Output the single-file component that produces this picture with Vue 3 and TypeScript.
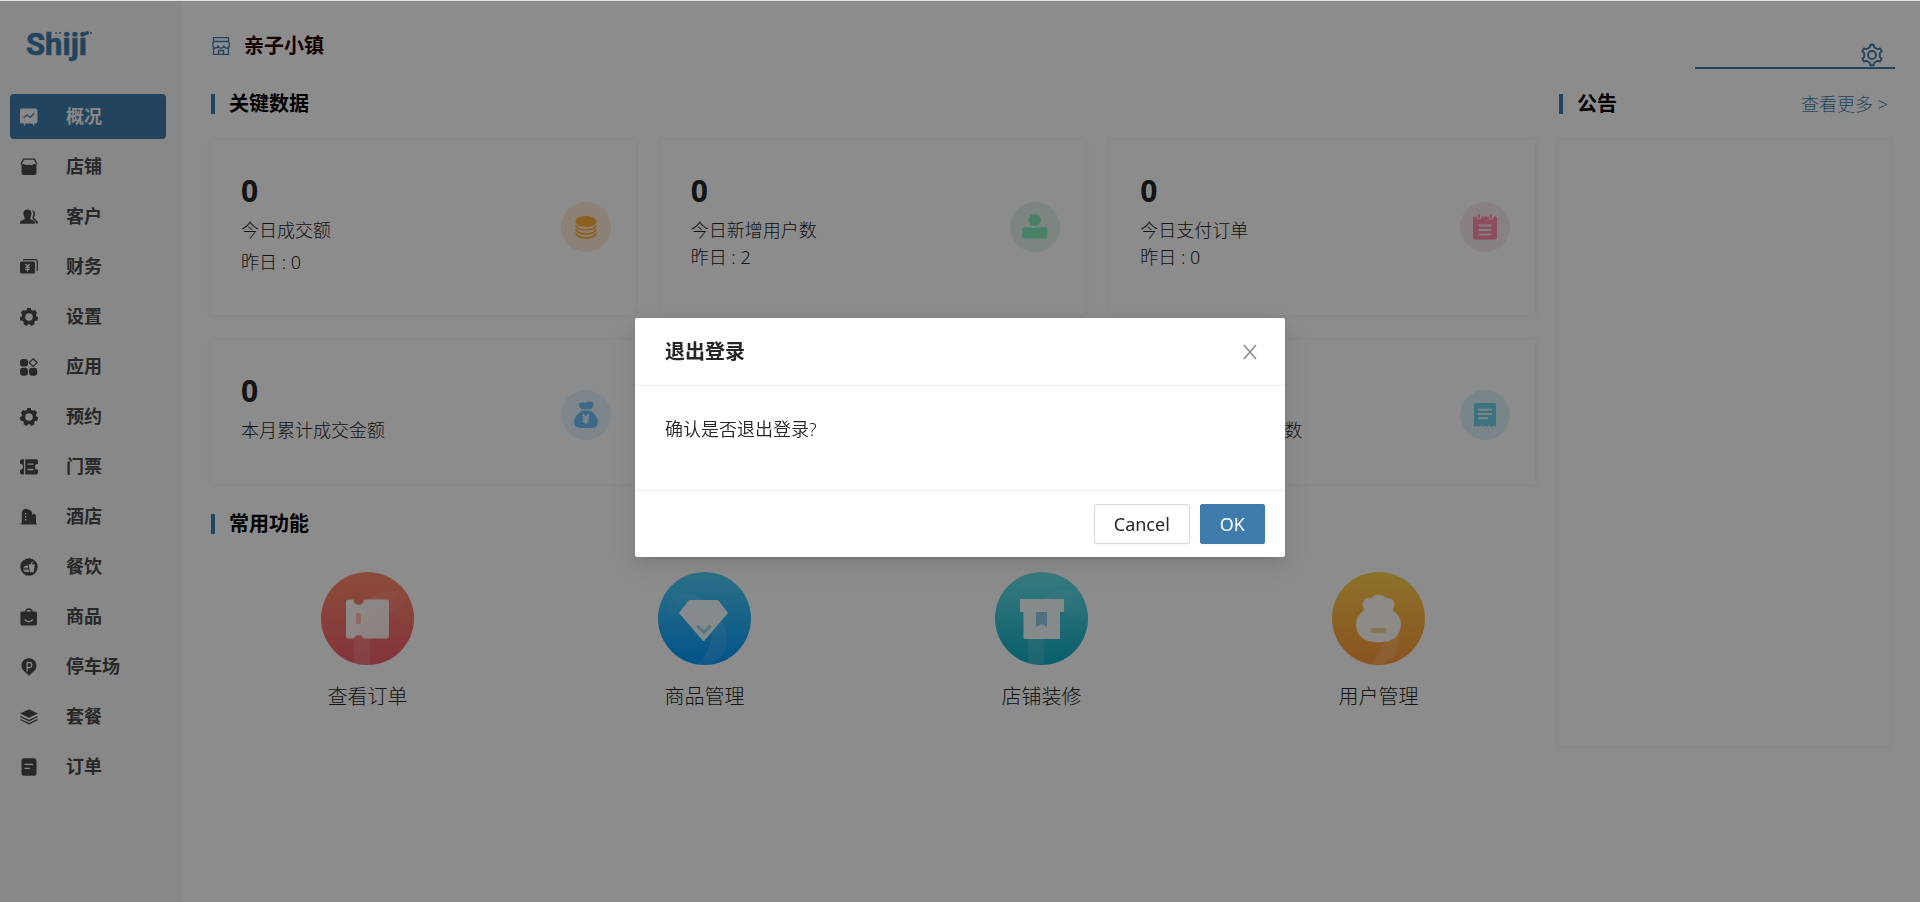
<script setup lang="ts">
import { ref } from 'vue'

interface Glyph { solid?: string; line?: string; cut?: string }
interface MenuItem { label: string; icon: Glyph }
interface Stat { value: number; label?: string; yesterday?: number; tone: string; icon: Glyph; loose?: boolean }

/* Cog outline: teeth spread evenly round the centre, the first one pointing up. */
function gear(teeth: number, c: number, outer: number, inner: number, top: number, base: number): string {
  const points: string[] = []
  const step = (Math.PI * 2) / teeth
  for (let i = 0; i < teeth; i++) {
    const a = i * step - Math.PI / 2
    const corners: [number, number][] = [
      [inner, a - step * base], [outer, a - step * top], [outer, a + step * top], [inner, a + step * base],
    ]
    for (const [r, t] of corners) points.push(`${(c + r * Math.cos(t)).toFixed(2)} ${(c + r * Math.sin(t)).toFixed(2)}`)
  }
  return `M${points.join('L')}Z`
}

const cog: Glyph = { solid: gear(7, 9, 9.2, 7.4, 0.22, 0.34) + 'M9 5.2a3.800 3.800 0 1 0 0 7.600a3.800 3.800 0 0 0 0-7.600Z' }
const headerGear = gear(6, 12, 10.4, 8, 0.15, 0.27)

const menu: MenuItem[] = [
  { label: '概况', icon: { solid: 'M2 .5h13.5a2 2 0 0 1 2 2v11a2 2 0 0 1-2 2H2a2 2 0 0 1-2-2v-11a2 2 0 0 1 2-2Z', line: 'M5.2 15l-1 2.6M12.8 15l1 2.6', cut: 'M3.6 9.8L7 7l3.2 2.2 3.9-3.7' } },
  { label: '店铺', icon: { solid: 'M1.5 7Q3 5.2 5 6.4Q7 7.8 9 6.4Q11 7.8 13 6.4Q15 5.2 16.5 7V14.5a2.5 2.5 0 0 1-2.500 2.500h-10a2.500 2.500 0 0 1-2.500-2.500Z', line: 'M1 6.500L3.500 1.200h11L17 6.500' } },
  { label: '客户', icon: { solid: 'M7.500 1.500c3 0 4.300 2.200 4 4.700-.2 2-1.300 3-1.300 4.200 0 1.500 4.800 1.600 4.800 4.100v1.200H0v-1.200C0 12 4.800 11.900 4.800 10.400 4.800 9.200 3.700 8.200 3.500 6.200 3.200 3.700 4.500 1.500 7.500 1.500ZM11.700 2.300c2.700.2 3.700 2.200 3.400 4.200-.2 1.700-1.200 2.400-1 3.500.2 1.200 3.700 1.700 3.900 5.500h-2c0-3.500-3.700-3.400-3.700-5.400 0-1 1-1.700 1.100-4 .1-1.700-.7-2.900-1.700-3.800Z' } },
  { label: '财务', icon: { solid: 'M1.500 3.500h12A1.500 1.500 0 0 1 15 5v9a1.500 1.500 0 0 1-1.500 1.500h-12A1.500 1.500 0 0 1 0 14V5a1.500 1.500 0 0 1 1.500-1.500Z', line: 'M3 1.700h12.500a1.800 1.800 0 0 1 1.800 1.800V13', cut: 'M5.500 6l2 2.500 2-2.500M7.500 8.500v5M5.300 9.300h4.400M5.300 11.400h4.400' } },
  { label: '设置', icon: cog },
  { label: '应用', icon: { solid: 'M3 1h2a3 3 0 0 1 3 3v1.500a3 3 0 0 1-3 3h-2A3 3 0 0 1 0 5.500V4A3 3 0 0 1 3 1ZM3 9.700h2A3 3 0 0 1 8 12.700v2a3 3 0 0 1-3 3h-2A3 3 0 0 1 0 14.700v-2a3 3 0 0 1 3-3ZM12 9.700h2.200a3 3 0 0 1 3 3v2a3 3 0 0 1-3 3H12A3 3 0 0 1 9 14.700v-2a3 3 0 0 1 3-3Z', line: 'M13.200.8L17.200 4.600 13.200 8.400 9.200 4.600Z' } },
  { label: '预约', icon: cog },
  { label: '门票', icon: { solid: 'M2 1.300h14a2 2 0 0 1 2 2v2.500a3 3 0 0 0 0 6v2.700a2 2 0 0 1-2 2H2a2 2 0 0 1-2-2v-2.700a3 3 0 0 0 0-6V3.300a2 2 0 0 1 2-2Z', cut: 'M4.600 1v16M7.500 6.200h6M7.500 11.500h6' } },
  { label: '酒店', icon: { solid: 'M1.800 15.500V4.500Q1.800 2.500 3.800 1.500Q6 0 8.500 1.500Q12 2.800 12 5V7l1.500-1.500 2.500 1.500V15.500h1v1H.5v-1ZM5 5v1.600h1.300V5ZM5 8v1.600h1.300V8ZM5 11v1.600h1.300V11Z' } },
  { label: '餐饮', icon: { solid: 'M9 .3a8.700 8.700 0 1 0 0 17.400A8.700 8.700 0 0 0 9 .3ZM8.800 6.200h2l1-2.200 1.700-.6.3.7-1.300.6-.6 1.500h2.800v1.300l-1 6.700H9.800L9 7.500ZM3.500 9.800Q4 7 7.800 7.500L8.500 9.800ZM3 10.700h5.700v.7H3ZM3.500 12.200h5.400l.2 1.800H5Q3.800 13.600 3.500 12.200Z' } },
  { label: '商品', icon: { solid: 'M2 3.500h13.300a1.700 1.700 0 0 1 1.700 1.700v10.600a1.700 1.700 0 0 1-1.700 1.700H2A1.700 1.700 0 0 1 .4 15.800V5.200A1.700 1.700 0 0 1 2 3.500Z', line: 'M5.700 4Q5.700 1 8.800 1Q12 1 12 4', cut: 'M4.800 11.500Q8.700 16 12.800 11.500' } },
  { label: '停车场', icon: { solid: 'M9 .3c4.300 0 7.500 3.300 7.500 7.400 0 3.300-2 5.200-4.300 7L9 17.700 5.800 14.700C3.500 12.900 1.500 11 1.500 7.700 1.500 3.600 4.700.3 9 .3Z', cut: 'M7.200 13.500V4.500h2q2.600.1 2.600 2.500T9.200 9.600H7.200' } },
  { label: '套餐', icon: { solid: 'M9 1.300L18 5.500 9 9.700 0 5.500Z', line: 'M.3 8.500L9 12.700l8.700-4.200M.3 11.500L9 15.700l8.700-4.200' } },
  { label: '订单', icon: { solid: 'M4 .3h10a2.500 2.500 0 0 1 2.500 2.500v12.400a2.500 2.500 0 0 1-2.500 2.500H4a2.500 2.500 0 0 1-2.500-2.500V2.800A2.500 2.500 0 0 1 4 .3Z', cut: 'M4.500 6.300h8.500M4.500 10.300h5.500' } },
]

const person: Glyph = { solid: 'M12.700 0a6 6 0 1 1 0 12.200 6 6 0 0 1 0-12.200ZM2.300 13.200H8.500q4.300 2 8.600 0h6.200a2 2 0 0 1 2 2v7.300a2 2 0 0 1-2 2H2.300a2 2 0 0 1-2-2v-7.300a2 2 0 0 1 2-2Z' }

const todayStats: Stat[] = [
  { value: 0, label: '今日成交额', yesterday: 0, tone: 'orange', loose: true, icon: { solid: 'M13 2c6.300 0 10.500 2.400 10.500 5.500S19.300 13 13 13 2.500 10.600 2.500 7.500 6.700 2 13 2Z', line: 'M2.900 11.200c1 3 5 4.600 10.100 4.600s9.100-1.600 10.100-4.600M2.900 15.200c1 3 5 4.600 10.100 4.600s9.100-1.600 10.100-4.600M2.900 19.200c1 3 5 4.600 10.100 4.600s9.100-1.600 10.100-4.600' } },
  { value: 0, label: '今日新增用户数', yesterday: 2, tone: 'green', icon: person },
  { value: 0, label: '今日支付订单', yesterday: 0, tone: 'pink', icon: { solid: 'M1.500 2.500h3V4Q5 5.700 7 5.700T9.300 4V2.500h7.600V4q.3 1.700 2.300 1.700T21.500 4V2.500H23.500a1.500 1.500 0 0 1 1.500 1.500V24a1.500 1.500 0 0 1-1.500 1.500h-21A1.500 1.500 0 0 1 1 24V4a1.500 1.500 0 0 1 .5-1.500ZM6 .5h2V4.500H6ZM18 .5h2V4.500h-2Z', cut: 'M6.500 11.500h13M6.500 16h13M6.500 20.500h13' } },
]

const monthStats: Stat[] = [
  { value: 0, label: '本月累计成交金额', tone: 'blue', icon: { solid: 'M6 2Q8.500-1 12.500 1Q16-1.500 20.500.5Q20.500 5.500 17.500 7.200H9Q5.500 5 6 2ZM9 8.500h8.500Q25 14.500 25 20.500Q24.500 26 18.500 26h-11Q1.500 26 1 20.500Q1 14.500 9 8.500Z', cut: 'M9.800 12.500l3 3.700 3-3.700M12.800 16.200v5.500M9.500 16.500h6.600M9.500 19.300h6.600' } },
  { value: 0, tone: 'green', icon: person },
  { value: 0, label: '本月累计支付订单数', tone: 'teal', icon: { solid: 'M3.500 1h19A1.500 1.500 0 0 1 24 2.500V25l-2.300-1.500L19.500 25 17 23.300 14.800 25 12.800 23.300 10.700 25 8.500 23.300 6 25 4.200 23.800 2 25V2.500A1.500 1.500 0 0 1 3.500 1Z', cut: 'M6 7.800h14M6 12h14M6 16.200h10' } },
]

const visible = ref(true)
const keyword = ref('')
const close = () => { visible.value = false }
</script>

<template>
  <div class="shell">
    <aside class="sidebar">
      <a class="logo" href="#" aria-label="Shiji">
        <svg width="66" height="40" viewBox="0 0 66 40">
          <text x="-1" y="31">Shiji</text>
          <circle cx="29" cy="9" r="1" /><circle cx="33" cy="9" r="1" />
          <circle cx="60" cy="9" r="2" /><circle cx="64" cy="9" r="1" />
        </svg>
      </a>
      <nav class="menu">
        <a v-for="(item, i) in menu" :key="item.label" href="#" class="menu-item" :class="{ active: i === 0 }">
          <svg class="menu-icon" viewBox="0 0 18 18">
            <path v-if="item.icon.solid" class="solid" :d="item.icon.solid" />
            <path v-if="item.icon.line" class="line" :d="item.icon.line" />
            <path v-if="item.icon.cut" class="cut" :d="item.icon.cut" />
          </svg>
          <span>{{ item.label }}</span>
        </a>
      </nav>
    </aside>

    <main class="main">
      <header class="topbar">
        <svg class="shop-icon" viewBox="0 0 18 18">
          <path d="M1.500.7h15v3.800h-15ZM1.500 4.500L.7 6.500v1.800a2.700 2.700 0 0 0 5.400 0 2.800 2.800 0 0 0 5.700 0 2.700 2.700 0 0 0 5.500 0V6.500l-.8-2M1.500 10.800v6.500h15v-6.500M6.500 17v-3.500h5V17" />
        </svg>
        <h1 class="store">亲子小镇</h1>
        <div class="search">
          <input v-model="keyword" type="text" aria-label="搜索">
          <button type="button" class="settings" aria-label="设置">
            <svg viewBox="0 0 24 24"><path :d="headerGear" /><circle cx="12" cy="12" r="4" /></svg>
          </button>
        </div>
      </header>

      <div class="columns">
        <div class="left">
          <h2 class="section-title">关键数据</h2>
          <div v-for="(row, r) in [todayStats, monthStats]" :key="r" class="stats" :class="r === 0 ? 'today' : 'month'">
            <article v-for="s in row" :key="s.tone" class="card">
              <div class="card-text">
                <strong class="value">{{ s.value }}</strong>
                <span v-if="s.label" class="label">{{ s.label }}</span>
                <span v-if="s.yesterday !== undefined" class="yesterday" :class="{ loose: s.loose }">昨日 : {{ s.yesterday }}</span>
              </div>
              <div class="badge" :class="s.tone">
                <svg viewBox="0 0 26 26">
                  <path v-if="s.icon.solid" class="solid" :d="s.icon.solid" />
                  <path v-if="s.icon.line" class="line" :d="s.icon.line" />
                  <path v-if="s.icon.cut" class="cut" :d="s.icon.cut" />
                </svg>
              </div>
            </article>
          </div>

          <h2 class="section-title">常用功能</h2>
          <div class="shortcuts">
            <a href="#" class="shortcut">
              <svg viewBox="0 0 93 93">
                <defs>
                  <linearGradient id="gr" x2="0" y2="1"><stop stop-color="#ff8b68" /><stop offset="1" stop-color="#f05f6c" /></linearGradient>
                  <linearGradient id="fr" x2="1" y2="1"><stop stop-color="#fff" /><stop offset="1" stop-color="#ffe9e4" /></linearGradient>
                  <linearGradient id="shine"><stop stop-color="#fff" stop-opacity=".14" /><stop offset="1" stop-color="#fff" stop-opacity="0" /></linearGradient>
                  <linearGradient id="shine-left" x1="1" x2="0"><stop stop-color="#fff" stop-opacity=".12" /><stop offset="1" stop-color="#fff" stop-opacity="0" /></linearGradient>
                </defs>
                <circle cx="46.500" cy="46.500" r="46.500" fill="url(#gr)" />
                <path d="M46 28Q62 16 84 19A46 46 0 0 1 92 52L68 40Z" fill="url(#shine)" />
                <path d="M33 62h16v31q-9 0-16-2Z" fill="#fff" fill-opacity=".14" />
                <path d="M28 27.500h4.500a5.200 5.200 0 0 0 10.500 0H65a3 3 0 0 1 3 3v33a3 3 0 0 1-3 3H42.500a5 5 0 0 0-9.500 0h-5a3 3 0 0 1-3-3v-33a3 3 0 0 1 3-3Z" fill="url(#fr)" />
                <rect x="35" y="41" width="5" height="11" rx="2" fill="#ffbfae" />
              </svg>
              <span>查看订单</span>
            </a>
            <a href="#" class="shortcut">
              <svg viewBox="0 0 93 93">
                <defs><linearGradient id="gb" x2="0" y2="1"><stop stop-color="#50cdf6" /><stop offset="1" stop-color="#0497fa" /></linearGradient></defs>
                <circle cx="46.500" cy="46.500" r="46.500" fill="url(#gb)" />
                <path d="M3 31Q25 14 45 28L28 42 4 50Z" fill="url(#shine-left)" />
                <path d="M64 48Q72 62 66 80Q61 89 50 93H38Q54 82 53 60Z" fill="#fff" fill-opacity=".12" />
                <path d="M31 28.500h29L69.500 41 45.500 69 21.500 41Z" fill="#f2fbff" stroke="#f2fbff" stroke-linejoin="round" />
                <path d="M39 53.500l7 7 6.500-7" fill="none" stroke="#a1d7ec" stroke-width="3" />
              </svg>
              <span>商品管理</span>
            </a>
            <a href="#" class="shortcut">
              <svg viewBox="0 0 93 93">
                <defs><linearGradient id="gt" x2="0" y2="1"><stop stop-color="#6ae0e9" /><stop offset="1" stop-color="#0cacc4" /></linearGradient></defs>
                <circle cx="46.500" cy="46.500" r="46.500" fill="url(#gt)" />
                <path d="M48 27Q64 15 85 19A46 46 0 0 1 92 52L67 40Z" fill="url(#shine)" />
                <path d="M33 65h16v28q-9 0-16-2Z" fill="#fff" fill-opacity=".14" />
                <path d="M25 27h44v13h-4v27H28.500V40H25Z" fill="#f2fbfc" />
                <path d="M41 40h11v15l-5.500-3-5.500 3Z" fill="#91cceb" />
              </svg>
              <span>店铺装修</span>
            </a>
            <a href="#" class="shortcut">
              <svg viewBox="0 0 93 93">
                <defs><linearGradient id="go" x2="0" y2="1"><stop stop-color="#fdd04c" /><stop offset="1" stop-color="#fd983a" /></linearGradient></defs>
                <circle cx="46.500" cy="46.500" r="46.500" fill="url(#go)" />
                <path d="M66 60Q69 72 62 84Q56 90 50 92H38Q49 82 53 68Z" fill="#fff" fill-opacity=".15" />
                <path d="M39.500 26Q42 22 46.500 23Q51 22 53.500 26Q62 25 62.500 32Q62.500 35 60.500 37.500Q69 44 69 53Q68 70 46.500 70.500Q25 70 24 53Q24 44 32.500 37.500Q30 35 30.500 32Q31 25 39.500 26Z" fill="#fffaf5" />
                <rect x="38.500" y="56" width="16" height="5" rx="2.500" fill="#f3d789" />
              </svg>
              <span>用户管理</span>
            </a>
          </div>
        </div>

        <section class="notice">
          <div class="notice-head">
            <h2 class="section-title">公告</h2>
            <a href="#" class="more">查看更多 &gt;</a>
          </div>
          <div class="notice-body"></div>
        </section>
      </div>
    </main>

    <div v-if="visible" class="mask">
      <div class="modal" role="dialog" aria-modal="true" aria-labelledby="modal-title">
        <header class="modal-head">
          <h3 id="modal-title">退出登录</h3>
          <button type="button" class="close" aria-label="Close" @click="close">
            <svg viewBox="0 0 16 16"><path d="M2 1l12 14M14 1L2 15" /></svg>
          </button>
        </header>
        <p class="modal-body">确认是否退出登录?</p>
        <footer class="modal-foot">
          <button type="button" class="btn" @click="close">Cancel</button>
          <button type="button" class="btn primary" @click="close">OK</button>
        </footer>
      </div>
    </div>
  </div>
</template>

<style>
body { background: #fff; }
</style>

<style scoped>
.shell {
  display: flex;
  box-sizing: border-box;
  min-height: 100vh;
  border-top: 1px solid #dee1e6;
  font-family: "Noto Sans", "Noto Sans CJK SC", sans-serif;
  font-size: 18px;
  font-weight: 300;
  line-height: 27px;
  color: #262626;
  --brand: #3f7cac;
}
.shell * { box-sizing: border-box; }
h1, h2, h3, p { margin: 0; }
a { color: inherit; text-decoration: none; }
button { font: inherit; color: inherit; cursor: pointer; }

.sidebar { flex: none; width: 181px; padding: 23px 15px 0 10px; background: #f8f8f8; }
.logo { display: block; height: 70px; padding-left: 17px; }
.logo svg { display: block; overflow: visible; fill: var(--brand); }
.logo text { font-family: "Liberation Sans Narrow", Roboto, sans-serif; font-size: 31px; font-weight: 700; stroke: var(--brand); stroke-width: .6; }
.menu { display: flex; flex-direction: column; gap: 5px; }
.menu-item {
  --cut: #f8f8f8;
  display: flex;
  align-items: center;
  gap: 28px;
  height: 45px;
  padding-left: 10px;
  border-radius: 4px;
  font-weight: 700;
  color: #494949;
}
.menu-item.active { --cut: var(--brand); background: var(--brand); color: #f8f8f8; }
.menu-icon { width: 18px; height: 18px; overflow: visible; }
.solid { fill: currentColor; fill-rule: evenodd; }
.line { fill: none; stroke: currentColor; stroke-width: 1.3; }
.cut { fill: none; stroke: var(--cut); stroke-width: 1.3; }

.main { flex: 1; min-width: 0; padding: 0 30px; }
.topbar { display: flex; align-items: center; height: 88px; margin-right: -5px; padding-top: 1px; }
.shop-icon { width: 18px; height: 18px; margin: 0 14px 0 1px; fill: none; stroke: var(--brand); stroke-width: 1.3; overflow: visible; }
.store { font-size: 20px; font-weight: 700; line-height: 28px; color: #280000; }
.search { display: flex; align-items: flex-end; align-self: flex-end; width: 200px; height: 36px; margin: 0 0 20px auto; padding-right: 11px; border-bottom: 2px solid var(--brand); }
.search input { flex: 1; min-width: 0; height: 32px; padding: 0 8px; border: 0; outline: 0; background: transparent; font: inherit; }
.settings { display: block; width: 24px; height: 24px; padding: 0; border: 0; background: none; }
.settings svg { display: block; fill: none; stroke: var(--brand); stroke-width: 1.8; stroke-linejoin: round; }

.columns { display: grid; grid-template-columns: 4fr 1fr; gap: 24px; align-items: stretch; }
.left { min-width: 0; }
.section-title { display: flex; align-items: center; height: 30px; font-size: 20px; font-weight: 700; line-height: 30px; color: #000; }
.section-title::before { content: ""; width: 4px; height: 20px; margin-right: 14px; background: var(--brand); }
.stats { display: grid; grid-template-columns: repeat(3, 1fr); gap: 25px; }
.today { margin-top: 21px; }
.month { margin: 25px 0 25px; }
.card, .notice-body { background: #fff; box-shadow: 0 0 6px rgba(0, 0, 0, .08); }
.card { display: flex; justify-content: space-between; padding: 0 25px 0 30px; }
.today .card { height: 175px; }
.month .card { height: 144px; }
.card-text { display: flex; flex-direction: column; padding-top: 33px; }
.value { font-size: 30px; font-weight: 700; line-height: 36px; margin-bottom: 8px; }
.yesterday.loose { margin-top: 5px; }
.badge { display: grid; place-items: center; width: 50px; height: 50px; margin-top: 62px; border-radius: 50%; }
.month .badge { margin-top: 50px; }
.badge svg { width: 26px; height: 26px; overflow: visible; }
.badge .line, .badge .cut { stroke-width: 2; }
.orange { --cut: #fdecd8; background: #fdecd8; color: #ffb037; }
.green { --cut: #e3f3eb; background: #e3f3eb; color: #82eab9; }
.pink { --cut: #f8ebee; background: #f8ebee; color: #ff8ca8; }
.blue { --cut: #e6f2fd; background: #e6f2fd; color: #70c0fa; }
.teal { --cut: #ddf3f8; background: #ddf3f8; color: #70d2e8; }

.shortcuts { display: grid; grid-template-columns: repeat(4, 1fr); margin: 33px -12px 0; }
.shortcut { display: flex; flex-direction: column; align-items: center; gap: 18px; font-size: 20px; }
.shortcut svg { display: block; width: 93px; height: 93px; }

.notice { display: flex; flex-direction: column; min-width: 0; }
.notice-head { display: flex; align-items: center; justify-content: space-between; padding-right: 2px; }
.more { color: var(--brand); }
.notice-body { height: 606px; margin-top: 21px; }

.mask { position: fixed; inset: 1px 0 0; display: flex; justify-content: center; align-items: flex-start; padding-top: 317px; background: rgba(0, 0, 0, .45); }
.modal { width: 650px; max-width: 100%; border-radius: 2px; background: #fff; box-shadow: 0 3px 6px -4px rgba(0, 0, 0, .12), 0 6px 16px rgba(0, 0, 0, .08), 0 9px 28px 8px rgba(0, 0, 0, .05); }
.modal-head { display: flex; align-items: center; justify-content: space-between; height: 68px; padding: 0 27px 0 30px; border-bottom: 1px solid #f0f0f0; }
.modal-head h3 { font-size: 20px; font-weight: 700; line-height: 28px; }
.close { display: block; width: 16px; height: 16px; padding: 0; border: 0; background: none; }
.close svg { display: block; fill: none; stroke: #8c8c8c; stroke-width: 1.6; }
.modal-body { min-height: 104px; padding: 30px; font-weight: 350; }
.modal-foot { display: flex; justify-content: flex-end; gap: 10px; padding: 13px 20px; border-top: 1px solid #f0f0f0; }
.btn { height: 40px; padding: 0 19px; border: 1px solid #d9d9d9; border-radius: 2px; background: #fff; box-shadow: 0 2px 0 rgba(0, 0, 0, .02); font-weight: 400; }
.btn.primary { border-color: var(--brand); background: var(--brand); color: #fff; }
</style>
